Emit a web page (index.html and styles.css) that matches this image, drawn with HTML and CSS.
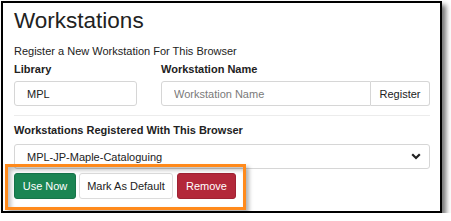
FILE: index.html
```html
<!DOCTYPE html>
<html lang="en">

<head>
    <meta charset="UTF-8">
    <meta name="viewport" content="width=device-width, initial-scale=1.0">
    <title>Workstations</title>

    <link rel="stylesheet" href="styles.css">
</head>

<body>
    <div class="frame">
        <h2 class="page-title">Workstations</h2>
        <p class="intro">Register a New Workstation For This Browser</p>

        <div class="register-row">
            <div class="field field-lib">
                <label for="lib">Library</label>
                <input type="text" id="lib" class="form-input" value="MPL">
            </div>
            <div class="field field-name">
                <label for="wsname">Workstation Name</label>
                <div class="input-group">
                    <input type="text" id="wsname" class="form-input grow" placeholder="Workstation Name">
                    <button class="btn btn-addon">Register</button>
                </div>
            </div>
        </div>

        <hr class="divider">

        <label class="field-label" for="wslist">Workstations Registered With This Browser</label>
        <div class="select-box" id="wslist">
            <span>MPL-JP-Maple-Cataloguing</span>
            <svg class="chevron" width="10" height="7" viewBox="0 0 10 7">
                <path d="M1.2 1.2 L5 5 L8.8 1.2" fill="none" stroke="#222" stroke-width="2.2" />
            </svg>
        </div>

        <div class="actions">
            <button class="btn btn-success">Use Now</button>
            <button class="btn btn-default">Mark As Default</button>
            <button class="btn btn-danger">Remove</button>
            <!-- 截图标注的橙色框 -->
            <div class="highlight"></div>
        </div>
    </div>
</body>

</html>
```

FILE: styles.css
```css
* {
    margin: 0;
    padding: 0;
    box-sizing: border-box;
}

body {
    background: #ffffff;
    font-family: "Liberation Sans", Arial, sans-serif;
    font-size: 11px;
    color: #222;
}

.frame {
    width: 441px;
    height: 212px;
    margin: 1px 0 0 1px;
    border: 2px solid #000;
    background: #fff;
    /* 截图外框的阴影 */
    box-shadow: 4px 4px 5px rgba(0, 0, 0, .55);
    padding: 5px 10px 0 11px;
}

.page-title {
    font-size: 22.5px;
    font-weight: normal;
    line-height: 25px;
    color: #222;
}

.intro {
    margin-top: 11px;
    line-height: 14px;
}

.register-row {
    display: flex;
    gap: 24px;
    margin-top: 4px;
}

.field label,
.field-label {
    display: block;
    font-weight: bold;
    line-height: 14px;
    margin-bottom: 5px;
}

.field-lib {
    width: 123px;
}

.field-name {
    flex: 1;
}

.form-input {
    display: block;
    width: 100%;
    height: 25px;
    border: 1px solid #d6d6d6;
    border-radius: 3px;
    padding: 0 12px;
    font-family: inherit;
    font-size: 11px;
    color: #222;
}

.form-input::placeholder {
    color: #7a7a7a;
}

.input-group {
    display: flex;
}

.input-group .grow {
    flex: 1;
    border-radius: 3px 0 0 3px;
}

.btn {
    height: 26px;
    border: 1px solid transparent;
    border-radius: 3px;
    font-family: inherit;
    font-size: 11px;
    padding: 0;
    white-space: nowrap;
    text-align: center;
    cursor: pointer;
}

.btn-addon {
    height: 25px;
    width: 59px;
    border-color: #d6d6d6;
    border-left: none;
    border-radius: 0 3px 3px 0;
    background: #fff;
    color: #222;
}

.divider {
    border: none;
    border-top: 1px solid #ececec;
    margin: 9px 0 7px;
}

.field-label {
    margin-bottom: 7px;
}

.select-box {
    display: flex;
    align-items: center;
    justify-content: space-between;
    height: 25px;
    border: 1px solid #d6d6d6;
    border-radius: 3px;
    padding: 0 8px 0 12px;
}

.actions {
    position: relative;
    display: flex;
    gap: 3px;
    margin-top: 4px;
}

.btn-success {
    width: 62px;
    background: #1b8553;
    border-color: #17744a;
    color: #fff;
}

.btn-default {
    width: 94px;
    background: #fff;
    border-color: #dcdcdc;
    color: #222;
}

.btn-danger {
    width: 59px;
    margin-left: 1px;
    background: #b3283a;
    border-color: #9f2233;
    color: #fff;
}

.highlight {
    position: absolute;
    left: -9px;
    top: -9px;
    width: 241px;
    height: 46px;
    border: 3px solid #ff8a1c;
    box-shadow: 3px 3px 4px rgba(0, 0, 0, .3), inset 3px 3px 4px rgba(0, 0, 0, .25);
    pointer-events: none;
}
```
